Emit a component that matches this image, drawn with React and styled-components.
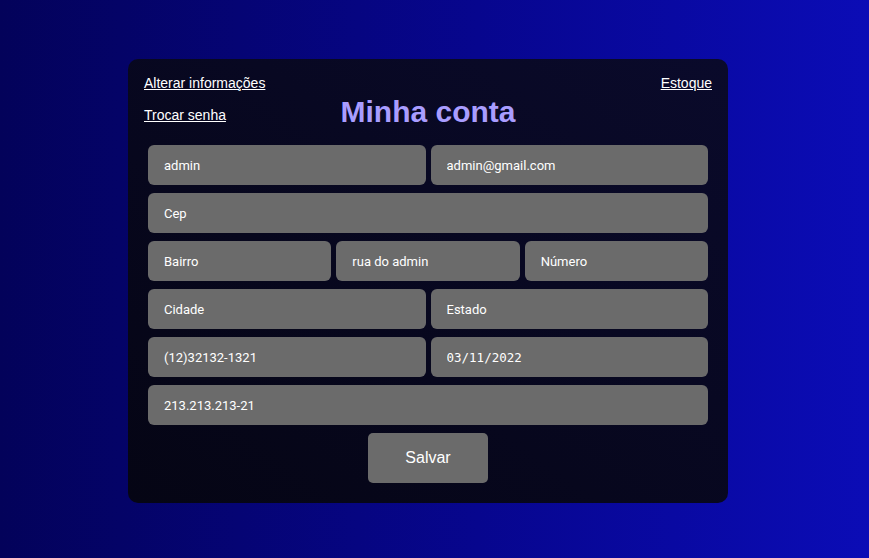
import React from 'react';
import styled, { createGlobalStyle } from 'styled-components';

const GlobalStyle = createGlobalStyle`
  html, body {
    margin: 0;
    padding: 0;
  }
  body {
    font-family: "Liberation Sans", Arial, sans-serif;
  }
`

const Page = styled.div`
  display: flex;
  justify-content: center;
  align-items: center;
  min-height: 100vh;
  box-sizing: border-box;
  padding: 4px 13px 0 0;
  background: linear-gradient(90deg, #03025a 0%, #07068e 55%, #0b0cb6 100%);
`

const Card = styled.div`
  display: flex;
  flex-direction: column;
  width: 600px;
  box-sizing: border-box;
  padding: 16px 16px 20px;
  border-radius: 10px;
  background: linear-gradient(to top right, #050514, #0a0a2b);
`

const TopRow = styled.div`
  display: flex;
  justify-content: space-between;
  line-height: 16px;
`

const NavLink = styled.a`
  color: #ffffff;
  font-size: 14px;
  text-decoration: underline;
  cursor: pointer;
`

const TitleRow = styled.div`
  display: grid;
  grid-template-columns: 1fr auto 1fr;
  margin-top: 4px;
  line-height: 16px;

  ${NavLink} {
    align-self: end;
    justify-self: start;
    margin-bottom: 6px;
  }
`

const Title = styled.h1`
  margin: 0;
  font-size: 30px;
  line-height: 34px;
  font-weight: bold;
  color: #a99dff;
`

const Form = styled.form`
  display: flex;
  flex-direction: column;
  gap: 8px;
  margin-top: 16px;
  padding: 0 4px;
`

const Row = styled.div`
  display: grid;
  grid-template-columns: repeat(${p => p.cols}, 1fr);
  column-gap: 5px;
`

const Field = styled.input`
  height: 40px;
  box-sizing: border-box;
  padding: 0 16px;
  border: none;
  outline: none;
  border-radius: 6px;
  background: #6b6b6b;
  color: #ffffff;
  font-family: ${p => p.mono ? '"DejaVu Sans Mono", monospace' : 'Roboto, "Liberation Sans", sans-serif'};
  font-size: ${p => p.mono ? '12.5px' : '13px'};
  font-weight: 400;
  min-width: 0;

  &::placeholder {
    color: #ffffff;
    opacity: 1;
  }
`

const SaveButton = styled.button`
  align-self: center;
  width: 120px;
  height: 50px;
  border: none;
  border-radius: 5px;
  background: #6b6b6b;
  color: #ffffff;
  font-family: "Liberation Sans", Arial, sans-serif;
  font-size: 16px;
  cursor: pointer;
`

export default function App() {
  return (
    <>
      <GlobalStyle />
      <Page>
        <Card>
          <TopRow>
            <NavLink>Alterar informações</NavLink>
            <NavLink>Estoque</NavLink>
          </TopRow>
          <TitleRow>
            <NavLink>Trocar senha</NavLink>
            <Title>Minha conta</Title>
          </TitleRow>
          <Form onSubmit={e => e.preventDefault()}>
            <Row cols={2}>
              <Field defaultValue="admin" />
              <Field defaultValue="admin@gmail.com" />
            </Row>
            <Row cols={1}>
              <Field placeholder="Cep" />
            </Row>
            <Row cols={3}>
              <Field placeholder="Bairro" />
              <Field defaultValue="rua do admin" />
              <Field placeholder="Número" />
            </Row>
            <Row cols={2}>
              <Field placeholder="Cidade" />
              <Field placeholder="Estado" />
            </Row>
            <Row cols={2}>
              <Field defaultValue="(12)32132-1321" />
              <Field mono defaultValue="03/11/2022" />
            </Row>
            <Row cols={1}>
              <Field defaultValue="213.213.213-21" />
            </Row>
            <SaveButton type="submit">Salvar</SaveButton>
          </Form>
        </Card>
      </Page>
    </>
  );
}
